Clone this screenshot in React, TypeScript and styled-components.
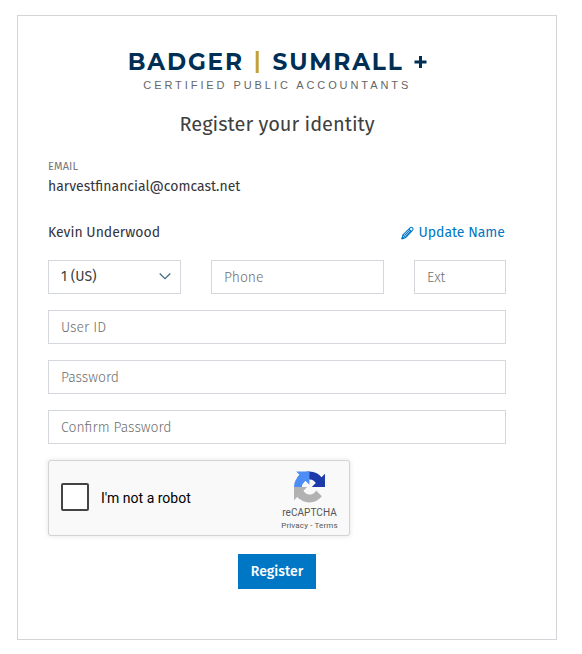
import React from "react";
import styled, { createGlobalStyle } from "styled-components";

const GlobalStyle = createGlobalStyle`
  *, *::before, *::after { box-sizing: border-box; }
  body {
    margin: 0;
    background: #fff;
    color: #404040;
    font-family: "Fira Sans", "Noto Sans", sans-serif;
    font-size: 14px;
  }
`;

const Card = styled.main`
  width: 540px;
  height: 625px;
  margin: 15px 0 0 17px;
  padding: 32px 50px 0 30px;
  border: 1px solid #d4d5d8;
  display: flex;
  flex-direction: column;
`;

const Logo = styled.svg`
  display: block;
  width: 300px;
  height: 46px;
  margin-left: 80px;
  flex: none;
`;

const Title = styled.h1`
  margin: 16px 0 0 131.5px;
  font-size: 20px;
  line-height: 28px;
  font-weight: 400;
  white-space: nowrap;
`;

const Label = styled.div`
  margin-top: 21px;
  font-size: 11px;
  line-height: 16px;
  letter-spacing: 0.1px;
  color: #777;
`;

const Line = styled.div`
  line-height: 20px;
  color: #35353c;
  white-space: nowrap;
`;

const Email = styled(Line)`
  margin-top: 2px;
`;

const NameRow = styled.div`
  display: flex;
  align-items: center;
  justify-content: space-between;
  margin-top: 26px;
`;

const EditLink = styled.a`
  display: flex;
  align-items: center;
  gap: 4px;
  line-height: 20px;
  color: #0077c5;
  text-decoration: none;
  margin-right: 1px;
  white-space: nowrap;
`;

const Fields = styled.form`
  display: grid;
  grid-template-columns: 133px 173px 92px;
  column-gap: 30px;
  row-gap: 16px;
  margin-top: 17px;
`;

const Select = styled.button`
  display: flex;
  align-items: center;
  justify-content: space-between;
  height: 34px;
  padding: 0 9px 2px 12px;
  border: 1px solid #d4d7dc;
  border-radius: 0;
  background: #fff;
  color: #404040;
  font: inherit;
`;

const Input = styled.input<{ $wide?: boolean }>`
  grid-column: ${(p) => (p.$wide ? "1 / -1" : "auto")};
  width: 100%;
  height: 34px;
  padding: 0 12px;
  border: 1px solid #d4d7dc;
  border-radius: 0;
  font: inherit;
  font-weight: 300;
  &::placeholder { color: #707070; opacity: 1; }
`;

const Captcha = styled.section`
  display: flex;
  align-items: center;
  width: 302px;
  height: 76px;
  margin-top: 16px;
  padding-left: 12px;
  border: 1px solid #d3d3d3;
  border-radius: 3px;
  background: #f9f9f9;
  box-shadow: 0 0 4px 1px rgba(0, 0, 0, 0.08);
  font-family: Roboto, sans-serif;
`;

const Checkbox = styled.span`
  width: 28px;
  height: 28px;
  margin-bottom: 2px;
  border: 2px solid #444;
  border-radius: 2px;
  background: #fff;
`;

const CaptchaText = styled.span`
  margin-left: 12px;
  font-size: 14px;
  line-height: 17px;
  color: #000;
`;

const Brand = styled.div`
  display: flex;
  flex-direction: column;
  align-items: center;
  width: 70px;
  height: 74px;
  margin-left: auto;
  margin-right: 4.5px;
  padding-top: 10px;
  color: #555;
`;

const BrandName = styled.div`
  margin-top: 4px;
  font-size: 10px;
  line-height: 11px;
  letter-spacing: 0.05px;
`;

const Legal = styled.div`
  margin-top: 3px;
  font-size: 8px;
  line-height: 10px;
  letter-spacing: 0.15px;
  white-space: pre;
`;

const Submit = styled.button`
  align-self: flex-start;
  width: 78px;
  height: 35px;
  margin: 18px 0 0 190px;
  padding: 0 0 1px;
  border: 0;
  background: #0077c5;
  color: #fff;
  font: inherit;
  font-weight: 500;
`;

const FirmLogo = () => (
  <Logo viewBox="0 0 300 46" role="img" aria-label="Badger Sumrall + Certified Public Accountants">
    <g fill="#002f56" fontFamily="Montserrat, Inter, sans-serif" fontWeight="700" fontSize="23" letterSpacing="1.8">
      <text x="-0.2" y="22.3" textLength="116" lengthAdjust="spacingAndGlyphs">BADGER</text>
      <text x="144.5" y="22.3" textLength="131" lengthAdjust="spacingAndGlyphs">SUMRALL</text>
    </g>
    <rect x="127.7" y="3" width="3" height="22" fill="#c4a03c" />
    <path d="M286.5 14h12M292.5 8v12" stroke="#002f56" strokeWidth="3" />
    <text x="15.3" y="41" textLength="265" fontFamily="Liberation Sans, sans-serif" fontSize="11" fill="#666">
      CERTIFIED PUBLIC ACCOUNTANTS
    </text>
  </Logo>
);

const Pencil = () => (
  <svg width="13.5" height="14" viewBox="0 0 14 14" fill="none" stroke="#0077c5" strokeWidth="1.1" strokeLinejoin="round">
    <path d="M1 13l1-4 7.4-7.3c.8-.8 1.7-.8 2.5 0s.8 1.7 0 2.5L4.8 11.7z" />
    <path d="M2.2 9l2.6 2.6M8.2 3l2.7 2.7M3.8 9.5l5.5-5.4M5 10.5l5.4-5.4" />
    <path d="M1 13l.6-2 1.4 1.4z" fill="#0077c5" />
  </svg>
);

const Chevron = () => (
  <svg width="12" height="8" viewBox="0 0 12 8" fill="none" stroke="#3d6679" strokeWidth="1.1">
    <path d="M.7 1.5L6 6.7l5.3-5.2" />
  </svg>
);

const RecaptchaMark = () => (
  <svg width="31" height="32" viewBox="0 0 64 64">
    <path fill="#1c3aa9" d="M64 31.955l-.033-1.37V4.687l-7.16 7.16C50.948 4.674 42.033.093 32.05.093c-10.4 0-19.622 4.96-25.458 12.64l11.736 11.86a15.55 15.55 0 0 1 4.754-5.334c2.05-1.6 4.952-2.906 8.968-2.906.485 0 .86.057 1.135.163 4.976.393 9.288 3.14 11.828 7.124l-8.307 8.307L64 31.953" />
    <path fill="#4c8df6" d="M31.862.094l-1.37.033H4.594l7.16 7.16C4.58 13.147 0 22.06 0 32.046c0 10.4 4.96 19.622 12.64 25.458L24.5 45.768a15.55 15.55 0 0 1-5.334-4.754c-1.6-2.05-2.906-4.952-2.906-8.968 0-.485.057-.86.163-1.135.393-4.976 3.14-9.288 7.124-11.828l8.307 8.307L31.86.095" />
    <path fill="#b2b2b2" d="M.001 32.045l.033 1.37v25.898l7.16-7.16c5.86 7.173 14.774 11.754 24.76 11.754 10.4 0 19.622-4.96 25.458-12.64l-11.736-11.86a15.55 15.55 0 0 1-4.754 5.334c-2.05 1.6-4.952 2.906-8.968 2.906-.485 0-.86-.057-1.135-.163-4.976-.393-9.288-3.14-11.828-7.124l8.307-8.307c-10.522.04-22.4.066-27.295-.005" />
  </svg>
);

export default function App() {
  return (
    <>
      <GlobalStyle />
      <Card>
        <FirmLogo />
        <Title>Register your identity</Title>
        <Label>EMAIL</Label>
        <Email>harvestfinancial@comcast.net</Email>
        <NameRow>
          <Line>Kevin Underwood</Line>
          <EditLink href="#">
            <Pencil />
            Update Name
          </EditLink>
        </NameRow>
        <Fields>
          <Select type="button">
            1 (US)
            <Chevron />
          </Select>
          <Input placeholder="Phone" />
          <Input placeholder="Ext" />
          <Input $wide placeholder="User ID" />
          <Input $wide type="password" placeholder="Password" />
          <Input $wide type="password" placeholder="Confirm Password" />
        </Fields>
        <Captcha>
          <Checkbox role="checkbox" aria-checked="false" />
          <CaptchaText>I'm not a robot</CaptchaText>
          <Brand>
            <RecaptchaMark />
            <BrandName>reCAPTCHA</BrandName>
            <Legal>Privacy - Terms</Legal>
          </Brand>
        </Captcha>
        <Submit type="button">Register</Submit>
      </Card>
    </>
  );
}
